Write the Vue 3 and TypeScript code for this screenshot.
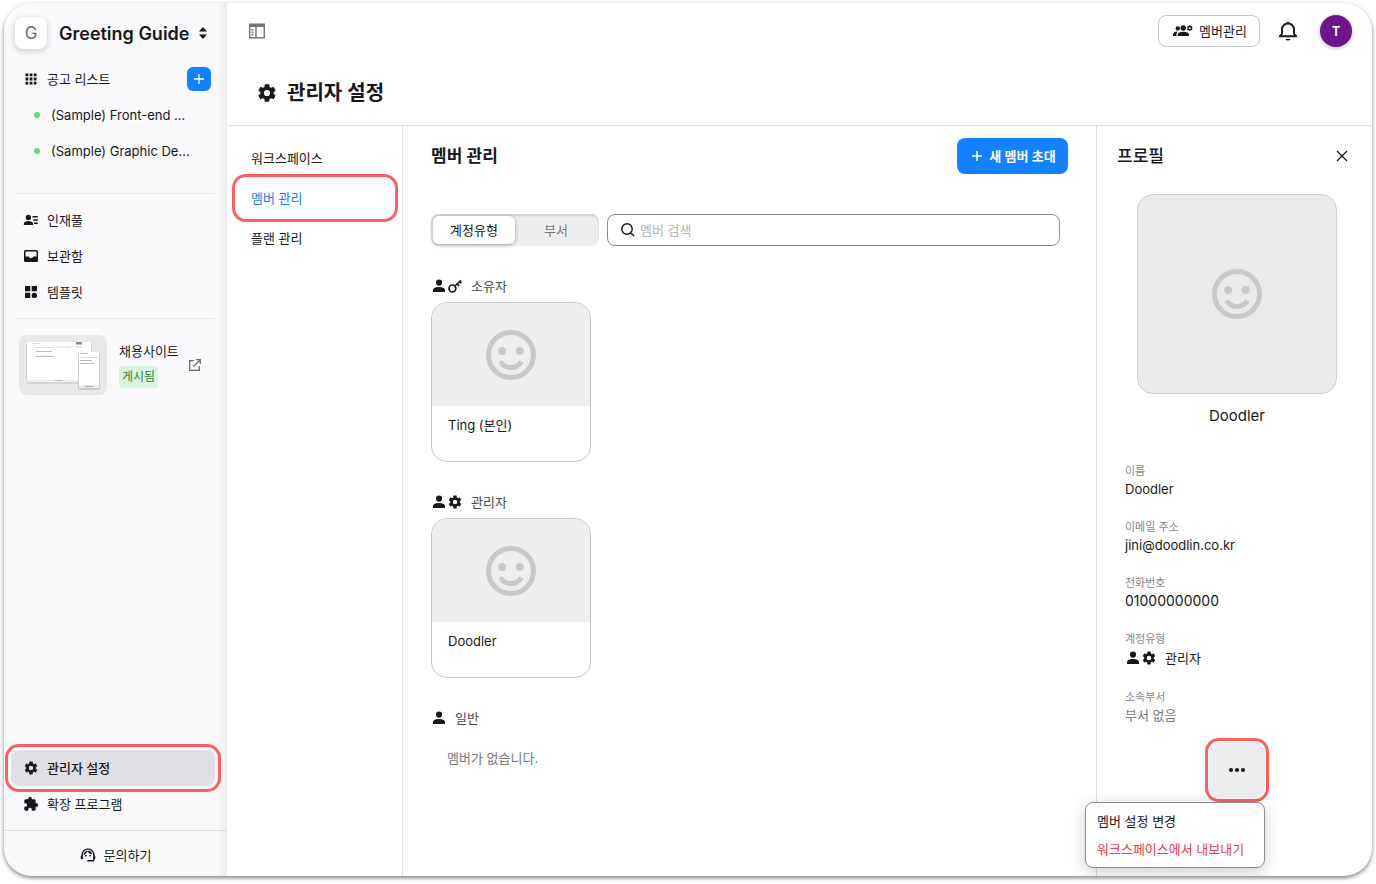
<script setup lang="ts">
import { ref } from 'vue'

interface MemberGroup {
  label: string
  badge: 'key' | 'gear' | null
  members: string[]
}

const postings = ['(Sample) Front-end ...', '(Sample) Graphic De...']
const settingsTabs = ['워크스페이스', '멤버 관리', '플랜 관리']
const activeTab = ref('멤버 관리')
const views = ['계정유형', '부서']
const activeView = ref('계정유형')
const query = ref('')

const groups: MemberGroup[] = [
  { label: '소유자', badge: 'key', members: ['Ting (본인)'] },
  { label: '관리자', badge: 'gear', members: ['Doodler'] },
  { label: '일반', badge: null, members: [] },
]

const contact = [
  { label: '이름', value: 'Doodler' },
  { label: '이메일 주소', value: 'jini@doodlin.co.kr' },
  { label: '전화번호', value: '01000000000', numeric: true },
]
</script>

<template>
  <svg class="sprite" aria-hidden="true">
    <symbol id="i-gear" viewBox="0 0 24 24">
      <path d="M19.14 12.94c.04-.3.06-.61.06-.94 0-.32-.02-.64-.07-.94l2.03-1.58c.18-.14.23-.41.12-.61l-1.92-3.32c-.12-.22-.37-.29-.59-.22l-2.39.96c-.5-.38-1.03-.7-1.62-.94l-.36-2.54c-.04-.24-.24-.41-.48-.41h-3.84c-.24 0-.43.17-.47.41l-.36 2.54c-.59.24-1.13.57-1.62.94l-2.39-.96c-.22-.08-.47 0-.59.22L2.74 8.87c-.12.21-.08.47.12.61l2.03 1.58c-.05.3-.09.63-.09.94s.02.64.07.94l-2.03 1.58c-.18.14-.23.41-.12.61l1.92 3.32c.12.22.37.29.59.22l2.39-.96c.5.38 1.03.7 1.62.94l.36 2.54c.05.24.24.41.48.41h3.84c.24 0 .44-.17.47-.41l.36-2.54c.59-.24 1.13-.56 1.62-.94l2.39.96c.22.08.47 0 .59-.22l1.92-3.32c.12-.22.07-.47-.12-.61l-2.01-1.58zM12 15.4a3.4 3.4 0 1 1 0-6.8 3.4 3.4 0 0 1 0 6.8z" />
    </symbol>
    <symbol id="i-person" viewBox="0 0 16 16">
      <circle cx="8" cy="4.6" r="3.1" />
      <path d="M2 14v-1.6C2 9.8 4.6 8.900 8 8.900s6 .9 6 3.500V14z" />
    </symbol>
    <symbol id="i-key" viewBox="0 0 16 16">
      <g fill="none" stroke="currentColor" stroke-width="1.7">
        <circle cx="5.4" cy="10.4" r="3.4" />
        <path d="M7.9 8 14 2.3M10.2 5.900l2 2.100M12.700 3.500l1.700 1.700" />
      </g>
    </symbol>
    <symbol id="i-smile" viewBox="0 0 24 24">
      <g fill="none" stroke="currentColor" stroke-width="2">
        <circle cx="12" cy="12" r="9" />
        <path d="M7.800 14.600a4.900 4.900 0 0 0 8.400 0" />
      </g>
      <circle cx="8.500" cy="10.400" r="1.600" />
      <circle cx="15.500" cy="10.400" r="1.600" />
    </symbol>
  </svg>

  <div class="window">
    <aside class="sidebar">
      <button class="workspace" type="button">
        <span class="logo">G</span>
        <span class="workspace-name">Greeting Guide</span>
        <svg class="sorter" viewBox="0 0 10 14"><path d="M5 1l4 4.500H1zM5 13l4-4.500H1z" /></svg>
      </button>

      <div class="posting-head">
        <a class="item" href="#postings">
          <svg class="icon" viewBox="0 0 16 16">
            <path d="M2.500 2.500h2.800v2.800H2.500zM6.600 2.500h2.800v2.800H6.600zM10.700 2.500h2.800v2.800h-2.800zM2.500 6.600h2.800v2.800H2.500zM6.600 6.600h2.800v2.800H6.600zM10.700 6.600h2.800v2.800h-2.800zM2.500 10.700h2.800v2.800H2.500zM6.600 10.700h2.800v2.800H6.600zM10.700 10.700h2.800v2.800h-2.800z" />
          </svg>
          공고 리스트
        </a>
        <button class="add" type="button" aria-label="공고 추가">
          <svg viewBox="0 0 24 24"><path d="M12 7v10M7 12h10" fill="none" stroke="currentColor" stroke-width="1.300" /></svg>
        </button>
      </div>
      <a v-for="posting in postings" :key="posting" class="posting" href="#posting">
        <i class="dot"></i>{{ posting }}
      </a>

      <nav class="group">
        <a class="item" href="#talent">
          <svg class="icon" viewBox="0 0 16 16">
            <circle cx="5.400" cy="5.400" r="2.700" />
            <path d="M.8 13v-1.200C.8 9.700 3 8.900 5.400 8.900s4.700.8 4.700 2.900V13zM9.500 4h5.300v1.500H9.500zM10.300 7.200h4.500v1.500h-4.500zM11 10.400h3.800v1.500H11z" />
          </svg>
          인재풀
        </a>
        <a class="item" href="#archive">
          <svg class="icon" viewBox="0 0 16 16">
            <path fill-rule="evenodd" d="M2.500 2h11A1.500 1.500 0 0 1 15 3.500v9a1.500 1.500 0 0 1-1.500 1.500h-11A1.500 1.500 0 0 1 1 12.500v-9A1.500 1.500 0 0 1 2.500 2zm0 1.500v5h3.300a2.300 2.300 0 0 0 4.400 0h3.300v-5z" />
          </svg>
          보관함
        </a>
        <a class="item" href="#template">
          <svg class="icon" viewBox="0 0 16 16">
            <path d="M2 2h5.300v5.300H2zM8.700 2H14v5.300H8.700zM2 8.700h5.300V14H2z" />
            <circle cx="11.400" cy="11.400" r="2.700" />
          </svg>
          템플릿
        </a>
      </nav>

      <a class="site" href="#site">
        <svg class="thumb" viewBox="0 0 88 60">
          <rect width="88" height="60" rx="8" fill="#e8e8ea" />
          <rect x="7" y="8" width="66" height="41" rx="2" fill="#d4d4d7" />
          <rect x="8" y="7" width="64" height="40" rx="1" fill="#fff" />
          <path d="M8 45h64v1.500H8z" fill="#e9e9eb" />
          <path d="M57 7h6v2.500h-6z" fill="#8a8a8a" />
          <path d="M13 8.500h8M16 12.500h20M37 12h8M46 12h8M55 12h8" stroke="#ccc" stroke-width=".7" />
          <path d="M17 16.500h16M17 21.500h18M36 45.500h8" stroke="#999" stroke-width=".7" />
          <rect x="59" y="17" width="22" height="38" rx="2" fill="#cbcbce" />
          <rect x="60" y="17" width="20" height="36" rx="1" fill="#fff" />
          <path d="M60 50h20v3H60z" fill="#ececee" />
          <path d="M61 22.500h18" stroke="#ccc" stroke-width=".7" />
          <path d="M61 18.500h8M61 25.500h12M61 28.500h14M66 51.500h8" stroke="#999" stroke-width=".7" />
        </svg>
        <span class="site-text">
          <span>채용사이트</span>
          <span class="status">게시됨</span>
        </span>
        <svg class="external" viewBox="0 0 14 14">
          <path d="M6 2.700H1.700v9.600h9.600V8M8 1.700h4.300V6M12 2 5.500 8.500" fill="none" stroke="currentColor" stroke-width="1.300" />
        </svg>
      </a>

      <nav class="bottom">
        <a class="item current" href="#admin">
          <svg class="icon"><use href="#i-gear" /></svg>
          관리자 설정
        </a>
        <a class="item" href="#extension">
          <svg class="icon" viewBox="0 0 24 24">
            <path d="M20.500 11H19V7c0-1.100-.9-2-2-2h-4V3.500a2.500 2.500 0 0 0-5 0V5H4c-1.100 0-2 .9-2 2v3.800h1.500a2.700 2.700 0 0 1 0 5.400H2V20c0 1.100.9 2 2 2h3.800v-1.500a2.700 2.700 0 0 1 5.400 0V22H17c1.100 0 2-.9 2-2v-4h1.500a2.500 2.500 0 0 0 0-5z" />
          </svg>
          확장 프로그램
        </a>
      </nav>
      <a class="support" href="#support">
        <svg class="icon" viewBox="1 1 22 22">
          <path d="M21 12.220C21 6.730 16.740 3 12 3c-4.690 0-9 3.650-9 9.280-.6.340-1 .98-1 1.720v2c0 1.100.9 2 2 2h1v-6.100c0-3.870 3.130-7 7-7s7 3.130 7 7V19h-8v2h8c1.100 0 2-.9 2-2v-1.220c.59-.31 1-.92 1-1.640v-2.300c0-.7-.41-1.310-1-1.620z" />
          <circle cx="9" cy="13" r="1.200" />
          <circle cx="15" cy="13" r="1.200" />
          <path d="M18 11.030C17.520 8.180 15.040 6 12.050 6c-3.030 0-6.290 2.510-6.030 6.450 2.470-1.010 4.330-3.210 4.860-5.890 1.310 2.630 4 4.440 7.120 4.470z" />
        </svg>
        문의하기
      </a>
    </aside>

    <main class="main">
      <header class="header">
        <div class="topbar">
          <button class="collapse" type="button" aria-label="사이드바 접기">
            <svg viewBox="0 0 18 16">
              <path d="M1.700 1.200h14.600v13.600H1.700z" fill="none" stroke="currentColor" stroke-width="1.400" />
              <path d="M1 1h16v3H1zM7.300 3h1.400v12H7.300zM3.400 6h2v1.400h-2zM3.400 8.500h2v1.400h-2zM3.400 11h2v1.400h-2z" />
            </svg>
          </button>
          <button class="manage" type="button">
            <svg viewBox="0 0 20 14">
              <circle cx="4.800" cy="4.400" r="2.200" />
              <circle cx="10.300" cy="4" r="2.700" />
              <path d="M0 12v-1.500C0 8.500 2 7.500 4.800 7.500c-1 .9-1.400 2-1.400 4.500zM4.700 12v-1C4.700 8.600 7 7.700 10.300 7.700s5.700.9 5.700 3.300v1z" />
              <path d="M16.800 1.300v5.800M14.300 2.800l5 2.900M14.300 5.700l5-2.900" stroke="currentColor" stroke-width="1.200" />
              <circle cx="16.800" cy="4.200" r="1.700" fill="#fff" stroke="currentColor" stroke-width="1.400" />
            </svg>
            멤버관리
          </button>
          <button class="bell" type="button" aria-label="알림">
            <svg viewBox="0 0 24 24">
              <path d="M12 4.500a6 6 0 0 0-6 6v4.200l-2.300 2.600h16.600L18 14.700v-4.200a6 6 0 0 0-6-6z" fill="none" stroke="currentColor" stroke-width="1.900" stroke-linejoin="round" />
              <path d="M9.500 19.900h5a2.600 2.200 0 0 1-5 0zM10.500 4.200a1.500 1.500 0 0 1 3 0z" />
            </svg>
          </button>
          <button class="avatar" type="button">T</button>
        </div>
        <h1><svg><use href="#i-gear" /></svg>관리자 설정</h1>
      </header>

      <div class="body">
        <nav class="tabs">
          <a
            v-for="tab in settingsTabs"
            :key="tab"
            href="#tab"
            :class="{ active: tab === activeTab }"
            @click.prevent="activeTab = tab"
          >{{ tab }}</a>
        </nav>

        <section class="members">
          <div class="members-head">
            <h2>멤버 관리</h2>
            <button class="invite" type="button">
              <svg viewBox="0 0 12 12"><path d="M6 1v10M1 6h10" stroke="currentColor" stroke-width="1.500" /></svg>
              새 멤버 초대
            </button>
          </div>

          <div class="toolbar">
            <div class="segment">
              <button
                v-for="view in views"
                :key="view"
                type="button"
                :class="{ on: view === activeView }"
                @click="activeView = view"
              >{{ view }}</button>
            </div>
            <label class="search">
              <svg viewBox="0 0 16 16">
                <path d="m10.700 10.700 3.300 3.300M12.200 7a5.200 5.200 0 1 1-10.400 0 5.200 5.200 0 0 1 10.400 0z" fill="none" stroke="currentColor" stroke-width="1.500" />
              </svg>
              <input v-model="query" type="search" placeholder="멤버 검색" aria-label="멤버 검색" />
            </label>
          </div>

          <section v-for="group in groups" :key="group.label" class="member-group">
            <h3>
              <svg class="icon"><use href="#i-person" /></svg>
              <svg v-if="group.badge" class="icon"><use :href="'#i-' + group.badge" /></svg>
              <span>{{ group.label }}</span>
            </h3>
            <button v-for="member in group.members" :key="member" class="card" type="button">
              <span class="face"><svg><use href="#i-smile" /></svg></span>
              <span class="card-name">{{ member }}</span>
            </button>
            <p v-if="!group.members.length">멤버가 없습니다.</p>
          </section>
        </section>

        <aside class="profile">
          <div class="profile-head">
            <h2>프로필</h2>
            <button type="button" aria-label="닫기">
              <svg viewBox="0 0 12 12"><path d="m1 1 10 10M11 1 1 11" stroke="currentColor" stroke-width="1.300" /></svg>
            </button>
          </div>
          <div class="photo"><svg><use href="#i-smile" /></svg></div>
          <p class="profile-name">Doodler</p>
          <dl>
            <div v-for="field in contact" :key="field.label">
              <dt>{{ field.label }}</dt>
              <dd :class="{ numeric: field.numeric }">{{ field.value }}</dd>
            </div>
            <div>
              <dt>계정유형</dt>
              <dd class="role">
                <svg class="icon"><use href="#i-person" /></svg>
                <svg class="icon"><use href="#i-gear" /></svg>
                <span>관리자</span>
              </dd>
            </div>
            <div>
              <dt>소속부서</dt>
              <dd class="none">부서 없음</dd>
            </div>
          </dl>
          <div class="more">
            <button class="more-button" type="button" aria-label="더보기">
              <svg viewBox="0 0 18 6">
                <circle cx="3" cy="3" r="2.100" /><circle cx="9" cy="3" r="2.100" /><circle cx="15" cy="3" r="2.100" />
              </svg>
            </button>
            <div class="menu">
              <button type="button">멤버 설정 변경</button>
              <button class="danger" type="button">워크스페이스에서 내보내기</button>
            </div>
          </div>
        </aside>
      </div>
    </main>
  </div>
</template>

<style>
body {
  margin: 0;
  background: #fff;
}
#app {
  box-sizing: border-box;
  display: flex;
  min-height: 100vh;
  padding: 3px 4px 8px;
}
</style>

<style scoped>
* {
  box-sizing: border-box;
}
.sprite {
  position: absolute;
  width: 0;
  height: 0;
}
svg {
  flex: none;
  fill: currentColor;
}
a {
  color: inherit;
  text-decoration: none;
}
button,
input {
  padding: 0;
  border: 0;
  background: none;
  color: inherit;
  font: inherit;
}
button {
  cursor: pointer;
}
h1, h2, h3, p, dl, dd {
  margin: 0;
}
.icon {
  width: 16px;
  height: 16px;
}
.window {
  flex: 1;
  display: flex;
  overflow: hidden;
  border-radius: 28px;
  background: #fff;
  box-shadow: 0 2px 4px rgba(0, 0, 0, 0.5);
  color: #17171c;
  font: 13px/17px Inter, "Noto Sans CJK KR", sans-serif;
}

/* Sidebar */
.sidebar {
  flex: none;
  display: flex;
  flex-direction: column;
  width: 223px;
  background: linear-gradient(to right, #f9f9fb 214px, #ececee);
}
.workspace {
  display: flex;
  align-items: center;
  margin: 14px 0 12px 11px;
}
.logo {
  width: 32px;
  height: 32px;
  border-radius: 8px;
  background: #fff;
  box-shadow: 0 2px 6px rgba(0, 0, 0, 0.2);
  color: #6b6b70;
  font-size: 17px;
  line-height: 33px;
}
.workspace-name {
  margin: 0 9px 0 12px;
  font-size: 18px;
  font-weight: 600;
}
.sorter {
  width: 10px;
  height: 14px;
}
.item {
  position: relative;
  display: flex;
  align-items: center;
  gap: 8px;
  height: 36px;
  padding-left: 12px;
  border-radius: 8px;
}
.posting-head {
  display: flex;
  align-items: center;
  justify-content: space-between;
  margin: 0 16px 0 7px;
}
.add {
  width: 24px;
  height: 24px;
  border-radius: 6px;
  background: #1482ff;
  color: #fff;
}
.add svg {
  display: block;
}
.posting {
  display: flex;
  align-items: center;
  gap: 11px;
  height: 36px;
  padding-left: 30px;
}
.dot {
  width: 6px;
  height: 6px;
  border-radius: 50%;
  background: #62d87a;
}
.group {
  margin: 24px 12px 0;
  padding: 8px 0;
  border-top: 1px solid #e7e7ea;
  border-bottom: 1px solid #e7e7ea;
}
.group .item {
  padding-left: 7px;
}
.site {
  display: flex;
  align-items: center;
  margin: 16px 0 0 15px;
}
.thumb {
  width: 88px;
  height: 60px;
}
.site-text {
  display: flex;
  flex-direction: column;
  align-items: flex-start;
  gap: 6px;
  margin: 0 9px 0 12px;
}
.status {
  padding: 0 3px;
  border-radius: 4px;
  background: #d8f5dd;
  color: #2e7d41;
  font-size: 12px;
  line-height: 22px;
}
.external {
  width: 14px;
  height: 14px;
  color: #6b6b70;
}
.bottom {
  margin-top: auto;
  padding: 0 12px 8px 7px;
}
.current {
  background: #e0e0e4;
  font-weight: 500;
}
.current::after,
.tabs .active::after,
.more-button::after {
  content: "";
  position: absolute;
  border: 3px solid #ff5f5f;
  border-radius: 14px;
  pointer-events: none;
}
.current::after {
  inset: -6px;
}
.support {
  display: flex;
  align-items: center;
  justify-content: center;
  gap: 8px;
  height: 46px;
  padding-top: 3px;
  border-top: 1px solid #dcdce0;
}

/* Header */
.main {
  flex: 1;
  display: flex;
  flex-direction: column;
  min-width: 0;
}
.header {
  padding: 12px 20px 0 21px;
  border-bottom: 1px solid #dfdfe2;
}
.topbar {
  display: flex;
  align-items: center;
}
.collapse {
  margin-right: auto;
  width: 18px;
  height: 16px;
  color: #747479;
}
.collapse svg {
  display: block;
}
.manage {
  display: flex;
  align-items: center;
  justify-content: center;
  gap: 6px;
  width: 102px;
  height: 32px;
  padding-left: 2px;
  border: 1px solid #c6c6ca;
  border-radius: 8px;
}
.manage svg {
  width: 20px;
  height: 14px;
}
.bell {
  width: 24px;
  height: 24px;
  margin: 0 20px 0 16px;
}
.bell svg {
  display: block;
}
.avatar {
  width: 32px;
  height: 32px;
  border-radius: 50%;
  background: #6e148c;
  box-shadow: 0 1px 4px rgba(0, 0, 0, 0.3);
  color: #fff;
  font-weight: 600;
}
h1 {
  display: flex;
  align-items: center;
  gap: 9px;
  height: 28px;
  margin: 32px 0 18px 8px;
  font-size: 20px;
  font-weight: 600;
  line-height: 28px;
}
h1 svg {
  width: 22px;
  height: 22px;
}
h2 {
  font-size: 17px;
  font-weight: 600;
  line-height: 18px;
}
.body {
  flex: 1;
  display: flex;
}
.tabs {
  flex: none;
  width: 176px;
  padding: 12px 4px 12px 5px;
  border-right: 1px solid #e3e3e8;
}
.tabs a {
  position: relative;
  display: flex;
  align-items: center;
  height: 40px;
  padding-left: 19px;
}
.tabs .active {
  color: #1482ff;
}
.tabs .active::after {
  inset: -4px 0;
}

/* Members */
.members {
  flex: 1;
  min-width: 0;
  padding: 12px 28px 0;
}
.members-head {
  display: flex;
  align-items: center;
  justify-content: space-between;
}
.invite {
  display: flex;
  align-items: center;
  justify-content: center;
  gap: 6px;
  width: 111px;
  height: 36px;
  padding-left: 2px;
  border-radius: 8px;
  background: #1482ff;
  color: #fff;
  font-weight: 600;
}
.invite svg {
  width: 12px;
  height: 12px;
}
.toolbar {
  display: flex;
  gap: 8px;
  margin: 40px 8px 28px 0;
}
.segment {
  display: flex;
  width: 168px;
  height: 32px;
  padding: 2px;
  border-radius: 8px;
  background: #eeeef0;
  box-shadow: inset 0 2px 2px rgba(0, 0, 0, 0.12);
  color: #77777c;
}
.segment button {
  flex: 1;
  border-radius: 6px;
}
.segment .on {
  background: #fff;
  box-shadow: 0 1px 4px rgba(0, 0, 0, 0.35);
  color: #17171c;
}
.search {
  flex: 1;
  display: flex;
  align-items: center;
  gap: 4px;
  padding: 0 12px;
  border: 1px solid #8b8a96;
  border-radius: 8px;
}
.search svg {
  width: 16px;
  height: 16px;
}
.search input {
  flex: 1;
  min-width: 0;
  outline: 0;
}
.search input::placeholder {
  color: #b4b4b8;
}
.member-group {
  margin-bottom: 28px;
}
h3 {
  display: flex;
  align-items: center;
  height: 24px;
  margin-bottom: 4px;
  font-size: 13px;
  font-weight: 400;
}
h3 span,
.role span {
  margin-left: 8px;
  color: #47474d;
}
.card {
  display: flex;
  flex-direction: column;
  width: 160px;
  height: 160px;
  overflow: hidden;
  border: 1px solid #c6c6ca;
  border-radius: 16px;
  text-align: left;
}
.face {
  display: grid;
  place-items: center;
  width: 100%;
  height: 103px;
  background: #eeeef0;
  color: #c8c8cb;
}
.face svg,
.photo svg {
  width: 60px;
  height: 60px;
}
.card-name {
  padding: 11px 16px;
}
.member-group p {
  padding: 16px 16px 0;
  color: #77777c;
}

/* Profile */
.profile {
  flex: none;
  width: 276px;
  padding: 12px 24px 0 20px;
  border-left: 1px solid #dfdfe6;
}
.profile-head {
  display: flex;
  align-items: center;
  justify-content: space-between;
  height: 36px;
}
.profile-head h2 {
  font-weight: 500;
}
.profile-head svg {
  display: block;
  width: 12px;
  height: 12px;
}
.photo {
  display: grid;
  place-items: center;
  width: 200px;
  height: 200px;
  margin: 20px 0 10px 20px;
  border: 1px solid #cfcfd3;
  border-radius: 16px;
  background: #eaeaec;
  color: #c8c8cb;
}
.profile-name {
  width: 240px;
  font-size: 15px;
  line-height: 24px;
  text-align: center;
}
dl {
  display: grid;
  gap: 20px;
  margin: 34px 0 18px 8px;
  line-height: 18px;
}
dt {
  color: #85858a;
  font-size: 11px;
}
.numeric {
  font-size: 14px;
}
.role {
  display: flex;
  align-items: center;
  height: 20px;
  line-height: 17px;
}
.role span {
  color: #17171c;
}
.none {
  color: #77777c;
}
.more {
  position: relative;
  width: 56px;
  margin-left: 92px;
}
.more-button {
  position: relative;
  display: grid;
  place-items: center;
  width: 56px;
  height: 56px;
  border-radius: 12px;
  background: #eeeef0;
}
.more-button svg {
  width: 18px;
  height: 6px;
}
.more-button::after {
  inset: -4px;
}
.menu {
  position: absolute;
  top: 60px;
  right: 0;
  display: flex;
  flex-direction: column;
  width: 180px;
  padding: 4px 11px;
  border: 1px solid #8b8a96;
  border-radius: 8px;
  background: #fff;
  box-shadow: 0 4px 16px rgba(0, 0, 0, 0.2);
}
.menu button {
  height: 28px;
  text-align: left;
  white-space: nowrap;
}
.menu .danger {
  color: #f0384f;
}
</style>
